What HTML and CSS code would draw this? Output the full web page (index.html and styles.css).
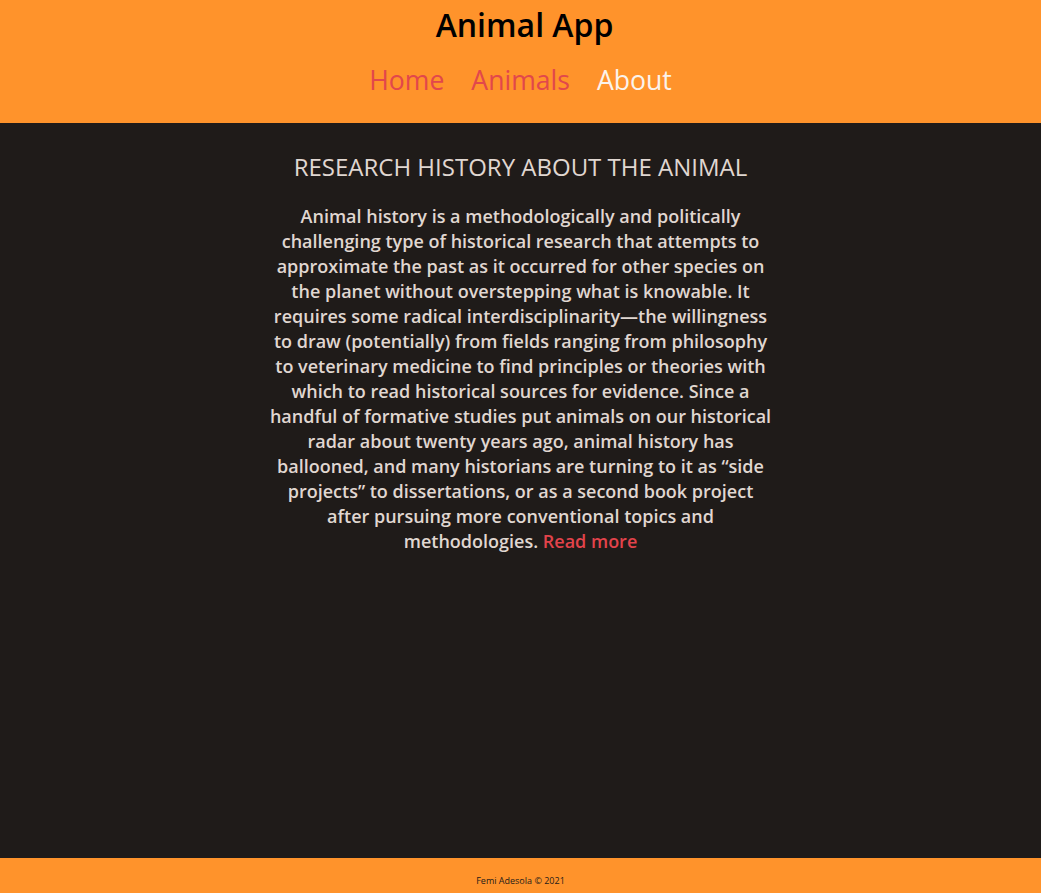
FILE: index.html
```html
<!DOCTYPE html>
<html lang="en">
<head>
<meta charset="utf-8">
<title>Animal App</title>
<link rel="stylesheet" href="styles.css">
</head>
<body>
<div class="page">
  <header class="site-header">
    <h1 class="site-title">Animal App</h1>
    <nav class="site-nav">
      <a class="nav-link" href="#">Home</a>
      <a class="nav-link" href="#">Animals</a>
      <a class="nav-link nav-active" href="#">About</a>
    </nav>
  </header>
  <main class="content">
    <h2 class="content-title">RESEARCH HISTORY ABOUT THE ANIMAL</h2>
    <p class="content-text">Animal history is a methodologically and politically challenging type of historical research that attempts to approximate the past as it occurred for other species on the planet without overstepping what is knowable. It requires some radical interdisciplinarity—the willingness to draw (potentially) from fields ranging from philosophy to veterinary medicine to find principles or theories with which to read historical sources for evidence. Since a handful of formative studies put animals on our historical radar about twenty years ago, animal history has ballooned, and many historians are turning to it as “side projects” to dissertations, or as a second book project after pursuing more conventional topics and methodologies. <a class="read-more" href="#">Read more</a></p>
  </main>
  <footer class="site-footer">Femi Adesola © 2021</footer>
</div>
</body>
</html>
```

FILE: styles.css
```css
html, body {
  margin: 0;
  padding: 0;
}
body {
  font-family: "Open Sans", "Noto Sans", sans-serif;
  background: #1f1b19;
}
.page {
  min-height: 100vh;
  display: flex;
  flex-direction: column;
}
.site-header {
  background: #ff932b;
  height: 123px;
  box-sizing: border-box;
  display: flex;
  flex-direction: column;
  align-items: center;
}
.site-title {
  margin: 0 0 0 8px;
  font-size: 32px;
  font-weight: 600;
  line-height: 50px;
  color: #000;
}
.site-nav {
  display: flex;
  gap: 27px;
  margin-top: 10px;
}
.nav-link {
  font-size: 26.6px;
  line-height: 40px;
  color: #e2474b;
  text-decoration: none;
}
.nav-active {
  color: #fbf3ec;
}
.content {
  flex: 1;
  display: flex;
  flex-direction: column;
  align-items: center;
  color: #e0d7d1;
}
.content-title {
  margin: 27px 0 0;
  font-size: 24px;
  font-weight: 400;
  line-height: 33px;
}
.content-text {
  width: 504px;
  margin: 21px 0 0;
  font-size: 18px;
  font-weight: 600;
  line-height: 25px;
  text-align: center;
}
.read-more {
  color: #e2434b;
  text-decoration: none;
}
.site-footer {
  background: #ff932b;
  height: 35px;
  display: flex;
  align-items: center;
  justify-content: center;
  padding-top: 9px;
  box-sizing: border-box;
  font-size: 9px;
  color: #1f1b19;
}
```
